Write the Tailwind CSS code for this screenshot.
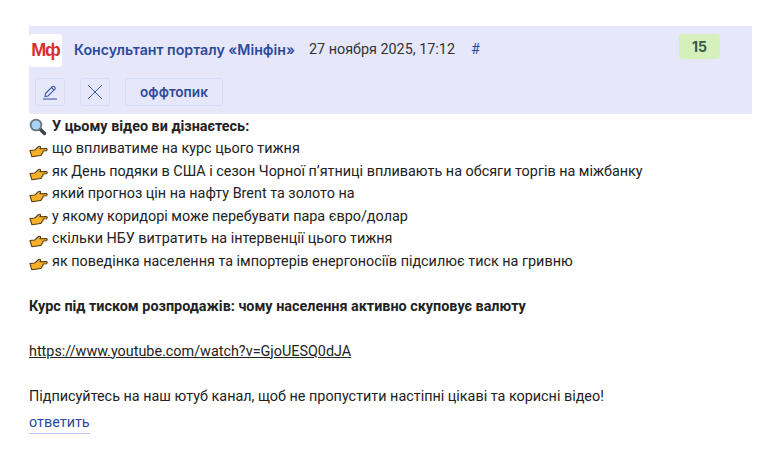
<!DOCTYPE html>
<html lang="en">
<head>
  <meta charset="UTF-8" />
  <title>Минфин</title>
  <script src="https://cdn.jsdelivr.net/npm/@tailwindcss/browser@4"></script>
</head>
<body class="bg-white overflow-hidden font-['Roboto',sans-serif] text-[14.38px] leading-[22.5px] text-[#222]">
  <svg width="0" height="0" class="absolute">
    <defs>
      <symbol id="hand" viewBox="0 0 20 14">
        <path d="M1 6.5 L6 6 L9.5 2.8 Q10.8 1.6 12 2.2 Q12.6 3 11.5 4.6 L18.4 4.4 Q20 5.4 18.4 6.8 L14.8 7 L14.6 9 L13.6 9.6 L13.2 11 L12 11.8 L3 13 Z" fill="#f6b02a" stroke="#4f3a12" stroke-width="1.1" stroke-linejoin="round"/>
      </symbol>
    </defs>
  </svg>

  <div class="pt-[26px] pl-[29px] pr-4">
    <!-- post header -->
    <div class="w-[723px] h-[88px] bg-[#e7e7fc] relative">
      <div class="flex items-start h-[48px]">
        <div class="w-[33px] h-[33px] mt-[8px] bg-white rounded-[3px] flex items-center justify-center font-['Liberation_Sans',sans-serif] font-bold text-[18px] tracking-[-1px] text-[#d8302b]">Мф</div>
        <a class="ml-[12px] mt-[13px] font-['Inter',sans-serif] font-semibold text-[14.2px] text-[#2c4a9a] w-[221px] whitespace-nowrap">Консультант порталу «Мінфін»</a>
        <span class="ml-[14px] mt-[13px] text-[#333]">27 ноября 2025, 17:12</span>
        <a class="ml-[16px] mt-[13px] text-[#2c4a9a]">#</a>
      </div>
      <div class="absolute right-[32px] top-[8px] w-[41px] h-[25px] pt-[1px] bg-[#d5f0bb] rounded-[4px] flex items-center justify-center font-['Inter',sans-serif] font-bold text-[14px] text-[#35594a]">15</div>
      <div class="flex items-center gap-[15px] pl-[6px] mt-[4px]">
        <button class="w-[30px] h-[28px] border border-[#d5dcf7] rounded-[3px] flex items-center justify-center">
          <svg width="16" height="16" viewBox="0 0 16 16" fill="none" stroke="#3f5ca8" stroke-width="1.1"><path d="M3.5 9.5 L10.5 2.5 Q11.5 1.8 12.6 2.8 L13 3.3 Q13.8 4.4 13 5.2 L6 12 L3 12.5 Z"/><path d="M9.5 3.5 L12 6"/><path d="M1 15 H15"/></svg>
        </button>
        <button class="w-[30px] h-[28px] border border-[#d5dcf7] rounded-[3px] flex items-center justify-center">
          <svg width="16" height="16" viewBox="0 0 16 16" fill="none" stroke="#3f5ca8" stroke-width="1"><path d="M1 1 L15 15 M15 1 L1 15"/></svg>
        </button>
        <button class="w-[98px] h-[28px] border border-[#d5dcf7] rounded-[3px] font-['Inter',sans-serif] font-semibold text-[13.6px] text-[#2c4a9a]">оффтопик</button>
      </div>
    </div>

    <!-- post body -->
    <div class="w-[723px] pt-[1.6px]">
      <p class="flex items-center gap-[5px] font-bold">
        <svg width="18" height="18" viewBox="0 0 18 18"><path d="M10.5 10.5 L15.5 15.5" stroke="#3d4347" stroke-width="3.4" stroke-linecap="round"/><circle cx="7" cy="7" r="5.4" fill="#a9d4ef" stroke="#66767f" stroke-width="1.8"/></svg>
        <span>У цьому відео ви дізнаєтесь:</span>
      </p>
      <p class="flex items-center gap-[4px]"><svg width="19" height="14" class="mt-[4px]"><use href="#hand"/></svg><span>що впливатиме на курс цього тижня</span></p>
      <p class="flex items-center gap-[4px]"><svg width="19" height="14" class="mt-[4px]"><use href="#hand"/></svg><span>як День подяки в США і сезон Чорної п’ятниці впливають на обсяги торгів на міжбанку</span></p>
      <p class="flex items-center gap-[4px]"><svg width="19" height="14" class="mt-[4px]"><use href="#hand"/></svg><span>який прогноз цін на нафту Brent та золото на</span></p>
      <p class="flex items-center gap-[4px]"><svg width="19" height="14" class="mt-[4px]"><use href="#hand"/></svg><span>у якому коридорі може перебувати пара євро/долар</span></p>
      <p class="flex items-center gap-[4px]"><svg width="19" height="14" class="mt-[4px]"><use href="#hand"/></svg><span>скільки НБУ витратить на інтервенції цього тижня</span></p>
      <p class="flex items-center gap-[4px]"><svg width="19" height="14" class="mt-[4px]"><use href="#hand"/></svg><span>як поведінка населення та імпортерів енергоносіїв підсилює тиск на гривню</span></p>
      <p class="mt-[22.5px] font-bold">Курс під тиском розпродажів: чому населення активно скуповує валюту</p>
      <p class="mt-[22.5px]"><a class="underline">https://www.youtube.com/watch?v=GjoUESQ0dJA</a></p>
      <p class="mt-[22.5px]">Підписуйтесь на наш ютуб канал, щоб не пропустити настіпні цікаві та корисні відео!</p>
      <a class="inline-block mt-[4px] border-b border-[#b5c6ea] text-[#2c4a9a] leading-[21px]">ответить</a>
    </div>
  </div>
</body>
</html>
